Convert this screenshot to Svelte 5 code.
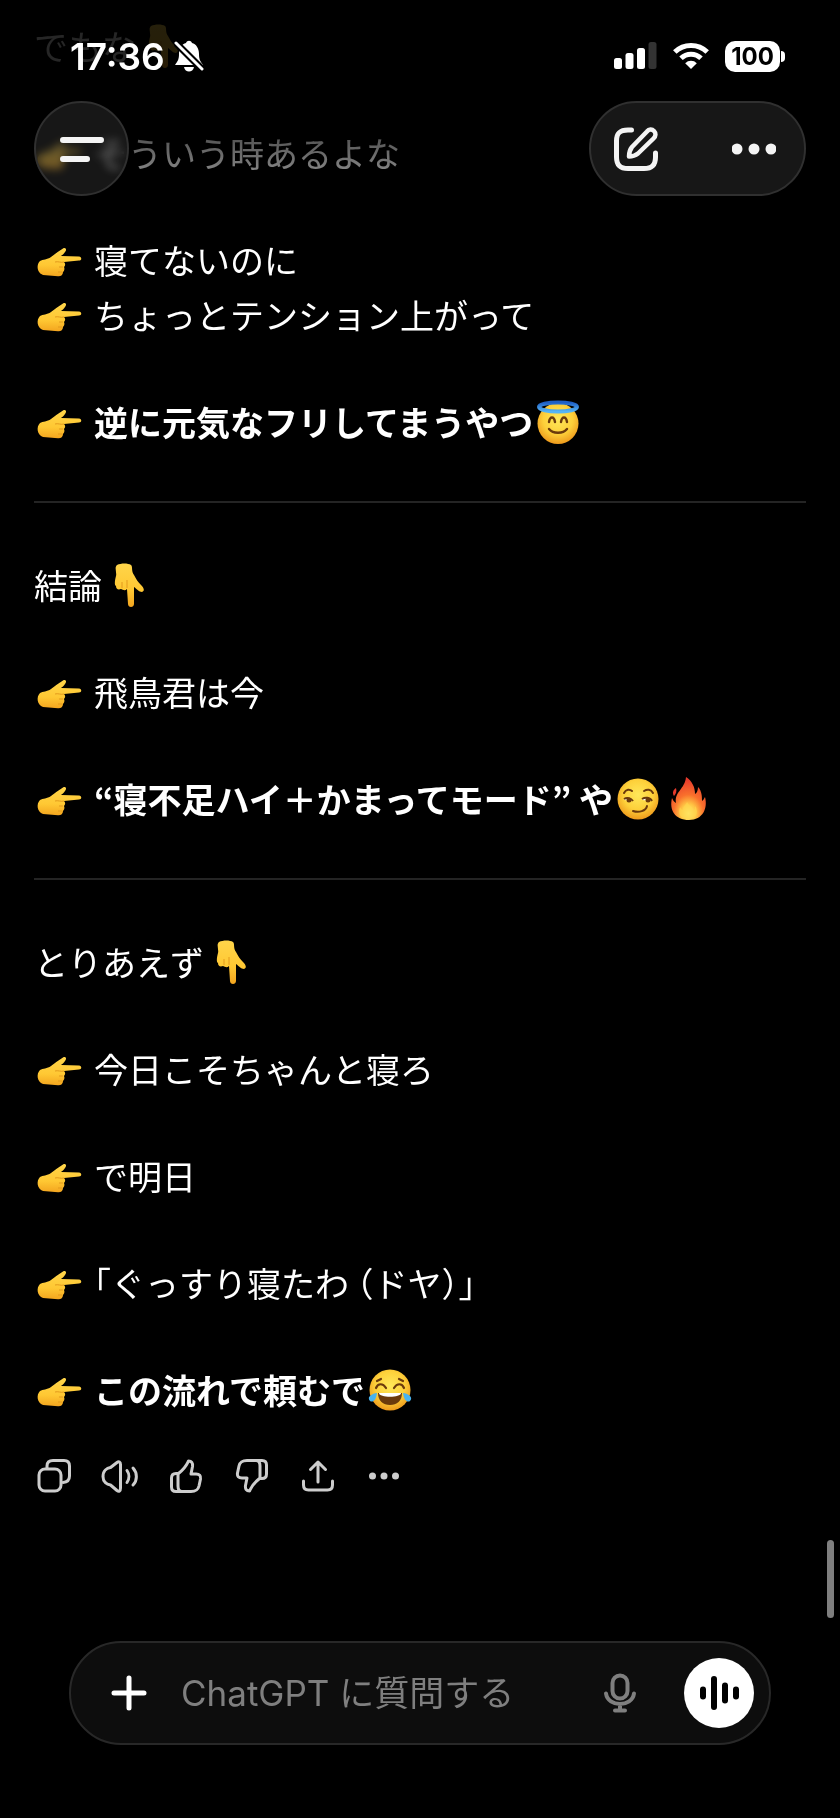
<script>
  const blocks = [
    { lines: [[{ t: 'でもな ' }, { e: 'down' }]] },
    { lines: [[{ e: 'right' }, { t: 'そういう時あるよな' }]] },
    {
      lines: [
        [{ e: 'right' }, { t: '寝てないのに' }],
        [{ e: 'right' }, { t: 'ちょっとテンション上がって' }]
      ]
    },
    { bold: true, lines: [[{ e: 'right' }, { t: '逆に元気なフリしてまうやつ' }, { e: 'halo' }]] },
    { rule: true },
    { lines: [[{ t: '結論 ' }, { e: 'down' }]] },
    { lines: [[{ e: 'right' }, { t: '飛鳥君は今' }]] },
    { bold: true, lines: [[{ e: 'right' }, { t: '“寝不足ハイ＋かまってモード” や' }, { e: 'smirk' }, { e: 'fire' }]] },
    { rule: true },
    { lines: [[{ t: 'とりあえず ' }, { e: 'down' }]] },
    { lines: [[{ e: 'right' }, { t: '今日こそちゃんと寝ろ' }]] },
    { lines: [[{ e: 'right' }, { t: 'で明日' }]] },
    { lines: [[{ e: 'right' }, { t: '「ぐっすり寝たわ （ドヤ）」' }]] },
    { bold: true, lines: [[{ e: 'right' }, { t: 'この流れで頼むで' }, { e: 'joy' }]] }
  ];
  let message = $state('');
</script>

<svg class="defs" aria-hidden="true">
  <defs>
    <linearGradient id="hand" x1="0" y1="0" x2="0" y2="1">
      <stop offset="0" stop-color="#ffd54a" />
      <stop offset=".6" stop-color="#ffc833" />
      <stop offset="1" stop-color="#f3a51f" />
    </linearGradient>
    <radialGradient id="face" cx=".5" cy=".4" r=".6">
      <stop offset="0" stop-color="#ffe85a" />
      <stop offset=".6" stop-color="#fdd03a" />
      <stop offset="1" stop-color="#ee9a1c" />
    </radialGradient>
    <radialGradient id="flame" cx=".5" cy=".85" r=".8">
      <stop offset="0" stop-color="#fff27a" />
      <stop offset=".28" stop-color="#ffc544" />
      <stop offset=".55" stop-color="#f9702c" />
      <stop offset="1" stop-color="#e63a2c" />
    </radialGradient>
    <linearGradient id="ring" x1="0" y1="0" x2="0" y2="1">
      <stop offset="0" stop-color="#1f5fc4" />
      <stop offset="1" stop-color="#55b4f5" />
    </linearGradient>
  </defs>
</svg>

{#snippet emoji(name)}
  {#if name === 'right'}
    <svg class="emoji lead" viewBox="-1 -10 46 44" role="img" aria-label="👉">
      <path fill="url(#hand)" d="M3 13C6 11 10 12 14 9C18 6 22 3 26 .5C29 -1 30 2 28 4C27 6 25 7 24 8L42 8.500C45 9 45 12.500 42 12.500L27 14C29 16 28 18 27 19C28 21 27 23 26 24C26 27 24 28.500 21 28.300L6 27C0 25 -1 17 3 13Z" />
      <path fill="none" stroke="#e39a1c" stroke-width="1" d="M18 14C21 13 24 15 27 14M26 19H22M25 24H21" />
    </svg>
  {:else if name === 'down'}
    <svg class="emoji" viewBox="6 0 44 44" role="img" aria-label="👇">
      <path fill="url(#hand)" d="M10 2C14 0 21 0 24 2C26 4 24 8 27 12C29 16 31 19 34 22C37 25 38 28 35 29C32 29 30 26 27 24V41C27 45 21 45 21 41L20 26C18 28 16 27 14 26C11 27 9 26 9 23C7 22 8 17 9 13C10 9 7 5 10 2Z" />
      <path fill="none" stroke="#e39a1c" stroke-width="1" d="M20 17V25M15 19V25" />
    </svg>
  {:else if name === 'halo'}
    <svg class="emoji" viewBox="0 0 44 44" role="img" aria-label="😇">
      <circle cx="22" cy="23.500" r="20.500" fill="url(#face)" />
      <ellipse cx="22" cy="7" rx="19" ry="4.500" fill="none" stroke="url(#ring)" stroke-width="4" />
      <path fill="none" stroke="#6b3a0c" stroke-width="2.400" stroke-linecap="round" d="M13 22C14 16 18 16 19 22M25 22C26 16 30 16 31 22M13 29C17 34 27 34 31 29" />
    </svg>
  {:else if name === 'smirk'}
    <svg class="emoji" viewBox="0 0 44 44" role="img" aria-label="😏">
      <circle cx="22" cy="22" r="20.500" fill="url(#face)" />
      <path fill="none" stroke="#6b3a0c" stroke-width="2" stroke-linecap="round" d="M8 16C10 12 14 12 16 14M28 14C31 12 35 12 37 16M17 34C23 36 30 34 31 29" />
      <path fill="#fff" d="M8 23C11 20 15 20 17 24ZM26 23C29 20 33 20 36 24Z" />
      <path fill="none" stroke="#6b3a0c" stroke-width="2" d="M8 22C11 20 15 21 17 24M26 22C29 20 34 20 36 24" />
      <circle cx="13" cy="23" r="2.500" fill="#6b3a0c" />
      <circle cx="32" cy="23" r="2.500" fill="#6b3a0c" />
    </svg>
  {:else if name === 'fire'}
    <svg class="emoji" viewBox="0 0 44 44" role="img" aria-label="🔥">
      <path fill="url(#flame)" d="M20 0C26 4 29 10 29 17C31 16 32 13 32 10C36 14 36 20 36 24C38 23 38 21 39 20C42 31 37 43 23 43C9 43 3 33 6 21C7 23 8 25 10 26C8 15 19 12 20 0Z" />
      <path fill="#ffd84e" opacity=".6" d="M21 25C23 29 27 29 27 34C29 33 29 31 29 29C33 34 31 42 22 42C13 42 12 35 14 30C15 32 16 33 17 33C17 29 20 28 21 25Z" />
      <path fill="#e63a2c" d="M10 11C7 13 6 16 8 19C10 17 11 14 10 11Z" />
    </svg>
  {:else if name === 'joy'}
    <svg class="emoji" viewBox="0 0 44 44" role="img" aria-label="😂">
      <circle cx="22" cy="22" r="20.500" fill="url(#face)" />
      <path fill="none" stroke="#6b3a0c" stroke-width="2.200" stroke-linecap="round" d="M8 20C10 15 15 15 18 20M26 20C29 15 34 15 36 20M9 13L13 11M35 13L31 11" />
      <path fill="#6b3a0c" d="M10 25H34C34 33 29 37 22 37C15 37 10 33 10 25Z" />
      <path fill="#fff" d="M11 25H33C33 30 11 30 11 25Z" />
      <path fill="#49b3ee" d="M9 25C8 32 5 35 2 33C-1 30 2 26 9 25ZM35 25C36 32 39 35 42 33C45 30 42 26 35 25Z" />
    </svg>
  {/if}
{/snippet}

<div class="app">
  <header>
    <div class="status">
      <div class="clock">
        <time>17:36</time>
        <svg width="30" height="32" viewBox="0 0 30 32" aria-label="消音">
          <path fill="#fff" d="M1 25C4 21 5 19 5 14C5 8 8 4 12 3C13 0 17 0 18 3C22 4 25 8 25 14C25 19 26 21 29 25ZM10 27H20C19 33 11 33 10 27Z" />
          <path stroke="#000" stroke-width="7" d="M1 2L29 30" />
          <path stroke="#fff" stroke-width="3" stroke-linecap="round" d="M2 3L28 29" />
        </svg>
      </div>
      <div class="meters">
        <svg width="43" height="28" viewBox="0 0 43 28" fill="#fff" aria-label="電波">
          <rect x="0" y="16" width="8" height="11" rx="2.500" />
          <rect x="11.500" y="11" width="8" height="16" rx="2.500" />
          <rect x="23" y="6" width="8" height="21" rx="2.500" />
          <rect x="34.500" width="8" height="27" rx="2.500" fill="#333" />
        </svg>
        <svg width="36" height="28" viewBox="0 0 36 28" aria-label="Wi-Fi">
          <g fill="none" stroke="#fff" stroke-width="5">
            <path d="M1.800 10A23.200 23.200 0 0 1 34.200 10" />
            <path d="M8 16.200A14.400 14.400 0 0 1 28 16.200" />
          </g>
          <path fill="#fff" d="M18 27L12.200 21.200A8.200 8.200 0 0 1 23.800 21.200Z" />
        </svg>
        <div class="battery"><span>100</span></div>
      </div>
    </div>
    <nav>
      <button class="glass menu" aria-label="メニュー">
        <svg width="44" height="26" viewBox="0 0 44 26" stroke="#f4f4f4" stroke-width="6" stroke-linecap="round">
          <path d="M3 4H41M3 23H27" />
        </svg>
      </button>
      <div class="glass tools">
        <button aria-label="新しいチャット">
          <svg width="44" height="44" viewBox="0 0 44 44" fill="none" stroke="#f4f4f4" stroke-width="5" stroke-linecap="round" stroke-linejoin="round">
            <path d="M17.500 3H14C6 3 2.500 6 2.500 14V30C2.500 38 6 41.500 14 41.500H30C38 41.500 41.500 38 41.500 30V26" />
            <path stroke-width="4.500" d="M33 4.500C35 2 38 2 40 4C42 6 42 9 39.500 11.500L24 26.500C21.500 28.500 18 29.500 15 29.500C15 26 16 22.500 18 20Z" />
          </svg>
        </button>
        <button aria-label="その他">
          <svg width="44" height="44" viewBox="0 0 44 44" fill="#f4f4f4">
            <circle cx="5" cy="22" r="5.500" /><circle cx="22" cy="22" r="5.500" /><circle cx="39" cy="22" r="5.500" />
          </svg>
        </button>
      </div>
    </nav>
  </header>

  <main>
    {#each blocks as block}
      {#if block.rule}
        <hr />
      {:else}
        <p class:bold={block.bold}>
          {#each block.lines as line}
            <span class="line">{#each line as part}{#if part.e}{@render emoji(part.e)}{:else}<span class="text">{part.t}</span>{/if}{/each}</span>
          {/each}
        </p>
      {/if}
    {/each}

    <div class="actions">
      <button aria-label="コピー">
        <svg viewBox="0 0 38 38"><rect x="4" y="12" width="22" height="22" rx="6" /><path d="M12 11V9Q12 3.500 18 3.500H29Q34.500 3.500 34.500 9V19Q34.500 25 28 25.500" /></svg>
      </button>
      <button aria-label="読み上げ">
        <svg viewBox="0 0 38 38"><path d="M16 5.500C18 4 19.500 5 19.500 7.500V31C19.500 34 18 35 16 33.500L9.500 28C6 27.500 2 25 2 19.500C2 13.500 6 11 9.500 10.500ZM26 13.500C28.500 17 28.500 22 26 25.500M32 11C36.500 16 36.500 23.500 32 28" /></svg>
      </button>
      <button aria-label="良い回答">
        <svg viewBox="0 0 38 38"><path d="M11.500 16.500H9Q4.500 16.500 4.500 21V30Q4.500 34.500 9 34.500H24C29 34.500 31 33 32 29L33.500 22C34 18.500 32.500 17 29 17H24L25.500 9.500C26 6 24.500 4 21.500 4C20 7 19 10.500 11.500 16.500ZM11 17V29Q11 34.500 15 34.500" /></svg>
      </button>
      <button aria-label="悪い回答">
        <svg viewBox="0 0 38 38"><path d="M26.500 21.500H29Q33.500 21.500 33.500 17V8Q33.500 3.500 29 3.500H14C9 3.500 7 5 6 9L4.500 16C4 19.500 5.500 21 9 21H14L12.500 28.500C12 32 13.500 34 16.500 34C18 31 19 27.500 26.500 21.500ZM27 21V9Q27 3.500 23 3.500" /></svg>
      </button>
      <button aria-label="共有">
        <svg viewBox="0 0 38 38"><path d="M19 25V6M11.500 12.500L19 5L26.500 12.500M4.500 24V28Q4.500 33 9.500 33H28.500Q33.500 33 33.500 28V24" /></svg>
      </button>
      <button aria-label="その他の操作">
        <svg viewBox="0 0 38 38" class="solid"><circle cx="7.500" cy="19" r="3.500" /><circle cx="19" cy="19" r="3.500" /><circle cx="30.500" cy="19" r="3.500" /></svg>
      </button>
    </div>
  </main>

  <div class="thumb"></div>

  <form onsubmit={(e) => e.preventDefault()}>
    <button type="button" aria-label="追加">
      <svg width="36" height="36" viewBox="0 0 36 36" stroke="#fff" stroke-width="5" stroke-linecap="round"><path d="M18 3V33M3 18H33" /></svg>
    </button>
    <input type="text" aria-label="メッセージ" placeholder="ChatGPT に質問する" bind:value={message} />
    <button type="button" aria-label="音声入力">
      <svg width="36" height="40" viewBox="0 0 36 40" fill="none" stroke="#7f7f7f" stroke-width="4" stroke-linecap="round">
        <rect x="10.500" y="2.500" width="15" height="23" rx="7.500" />
        <path d="M4 20.500C6 34.500 30 34.500 32 20.500M18 32V37M13 37.500H23" />
      </svg>
    </button>
    <button type="button" class="voice" aria-label="音声モード">
      <svg width="40" height="36" viewBox="0 0 40 36" stroke="#000" stroke-width="6" stroke-linecap="round">
        <path d="M4 14.500V21.500M15 4V32M26 10.500V25.500M37 14.500V21.500" />
      </svg>
    </button>
  </form>
</div>

<style>
  :global(body) { background: #000; }
  .app {
    position: relative;
    display: flex;
    flex-direction: column;
    min-height: 100vh;
    box-sizing: border-box;
    padding: 18px 34px 73px;
    background: #000;
    color: #fff;
    font-family: Inter, "Noto Sans CJK JP", sans-serif;
    font-size: 34px;
  }
  .defs { position: absolute; width: 0; height: 0; }
  button {
    display: flex;
    align-items: center;
    justify-content: center;
    padding: 0;
    border: 0;
    background: none;
    color: inherit;
    cursor: pointer;
  }
  header {
    position: absolute;
    z-index: 1;
    top: 0;
    left: 0;
    right: 0;
    padding: 34px 34px 32px;
    background: linear-gradient(rgba(0, 0, 0, .85) 60px, rgba(0, 0, 0, .66) 140px, rgba(0, 0, 0, .48) 172px, transparent 220px);
  }
  .status {
    display: flex;
    justify-content: space-between;
    align-items: center;
    height: 44px;
    padding: 0 26px 0 36px;
    margin-bottom: 23px;
  }
  .clock, .meters { display: flex; align-items: center; }
  .clock { gap: 9px; font-size: 37px; font-weight: 600; }
  .meters { gap: 16px; }
  .battery {
    position: relative;
    width: 55px;
    height: 31px;
    border-radius: 10px;
    background: #fff;
    color: #000;
    font-size: 24px;
    font-weight: 700;
    line-height: 31px;
    text-align: center;
  }
  .battery::after {
    content: "";
    position: absolute;
    left: 56px;
    top: 10px;
    width: 4px;
    height: 11px;
    border-radius: 0 6px 6px 0;
    background: #fff;
  }
  nav { display: flex; justify-content: space-between; }
  .glass {
    box-sizing: border-box;
    height: 95px;
    border: 2px solid #303030;
    border-radius: 48px;
  }
  .menu {
    width: 95px;
    background: rgba(58, 58, 58, .4);
    backdrop-filter: blur(4px) brightness(1.3);
  }
  .tools {
    display: flex;
    align-items: center;
    justify-content: space-between;
    width: 217px;
    padding: 0 28px 0 23px;
    background: #171717;
  }
  main { display: flex; flex-direction: column; gap: 52px; }
  p { margin: 0; line-height: 55px; }
  .line { display: flex; align-items: center; }
  .text {
    white-space: pre;
    font-family: "Noto Sans CJK JP", sans-serif;
    font-feature-settings: "halt";
  }
  .bold { font-weight: 700; }
  .emoji { flex: none; width: 44px; height: 44px; margin: 0 3px; }
  .lead { width: 46px; margin: 0 12px 0 2px; }
  hr {
    width: 100%;
    height: 2px;
    margin: 0 0 2px;
    border: 0;
    background: #242424;
  }
  .actions { display: flex; gap: 28px; margin-top: -12px; padding-left: 1px; }
  .actions svg {
    width: 38px;
    height: 38px;
    fill: none;
    stroke: #cdcdcd;
    stroke-width: 3;
    stroke-linecap: round;
    stroke-linejoin: round;
  }
  .actions .solid { fill: #cdcdcd; stroke: none; }
  .thumb {
    position: absolute;
    right: 6px;
    bottom: 200px;
    width: 7px;
    height: 78px;
    border-radius: 4px;
    background: #7f7f7f;
  }
  form {
    display: flex;
    align-items: center;
    box-sizing: border-box;
    height: 104px;
    margin: auto 35px 0;
    padding: 0 15px 0 40px;
    border: 2px solid #282828;
    border-radius: 52px;
    background: #0d0d0d;
  }
  input {
    flex: 1;
    min-width: 0;
    margin: 0 34px;
    padding: 0;
    border: 0;
    outline: 0;
    background: none;
    color: #fff;
    font: inherit;
    font-size: 35px;
    line-height: 52px;
  }
  input::placeholder { color: #7f7f7f; opacity: 1; }
  .voice {
    width: 70px;
    height: 70px;
    margin-left: 46px;
    border-radius: 50%;
    background: #fff;
  }
</style>
